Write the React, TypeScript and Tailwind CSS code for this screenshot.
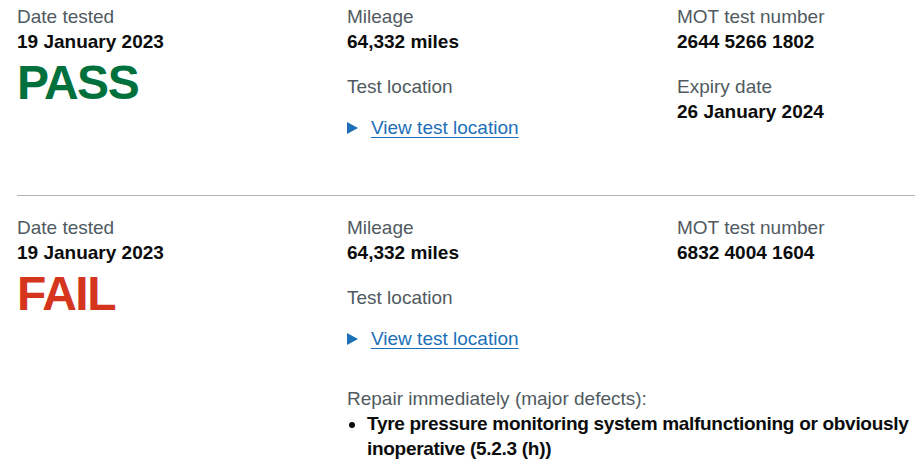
const labelClass = "text-[#505a5f]";
const valueClass = "font-bold text-[#0b0c0c]";

function Field({ label, value, className = "" }: { label: string; value: string; className?: string }) {
  return (
    <div className={className}>
      <p className={labelClass}>{label}</p>
      <p className={valueClass}>{value}</p>
    </div>
  );
}

function LocationDetails() {
  return (
    <div className="mt-4 flex items-center">
      <span
        aria-hidden="true"
        className="mr-[13px] h-0 w-0 border-y-[6.5px] border-l-[11px] border-y-transparent border-l-[#1d70b8]"
      />
      <a href="#" className="text-[#1d70b8] underline decoration-1 underline-offset-[3px]">
        View test location
      </a>
    </div>
  );
}

interface TestResult {
  date: string;
  result: "PASS" | "FAIL";
  mileage: string;
  number: string;
  expiry?: string;
  defects?: string[];
}

const results: TestResult[] = [
  {
    date: "19 January 2023",
    result: "PASS",
    mileage: "64,332 miles",
    number: "2644 5266 1802",
    expiry: "26 January 2024",
  },
  {
    date: "19 January 2023",
    result: "FAIL",
    mileage: "64,332 miles",
    number: "6832 4004 1604",
    defects: ["Tyre pressure monitoring system malfunctioning or obviously inoperative (5.2.3 (h))"],
  },
];

function ResultSection({ item, first }: { item: TestResult; first: boolean }) {
  return (
    <section
      className={`grid grid-cols-[330px_330px_1fr] ${first ? "pt-[4px] pb-[55px]" : "pt-[19px] pb-8"}`}
    >
      <div>
        <Field label="Date tested" value={item.date} />
        <p
          className={`mt-[4px] text-[48px] font-bold leading-[50px] tracking-[-1.5px] ${
            item.result === "PASS" ? "text-[#00703c]" : "text-[#d4351c]"
          }`}
        >
          {item.result}
        </p>
      </div>
      <div>
        <Field label="Mileage" value={item.mileage} />
        <p className={`mt-5 ${labelClass}`}>Test location</p>
        <LocationDetails />
      </div>
      <div>
        <Field label="MOT test number" value={item.number} />
        {item.expiry ? <Field className="mt-5" label="Expiry date" value={item.expiry} /> : null}
      </div>
      {item.defects ? (
        <div className="col-span-2 col-start-2 mt-[35px]">
          <p className={labelClass}>Repair immediately (major defects):</p>
          <ul className="list-disc pl-5">
            {item.defects.map((d) => (
              <li key={d} className={`${valueClass} tracking-[-0.3px]`}>
                {d}
              </li>
            ))}
          </ul>
        </div>
      ) : null}
    </section>
  );
}

export default function App() {
  return (
    <div className="h-[473px] w-[915px] overflow-hidden bg-white pl-[17px] font-['Liberation_Sans',Arial,sans-serif] text-[19px] leading-[25px]">
      {results.map((item, i) => (
        <div key={item.number}>
          {i > 0 ? <hr className="border-0 border-t border-[#b1b4b6]" /> : null}
          <ResultSection item={item} first={i === 0} />
        </div>
      ))}
    </div>
  );
}
